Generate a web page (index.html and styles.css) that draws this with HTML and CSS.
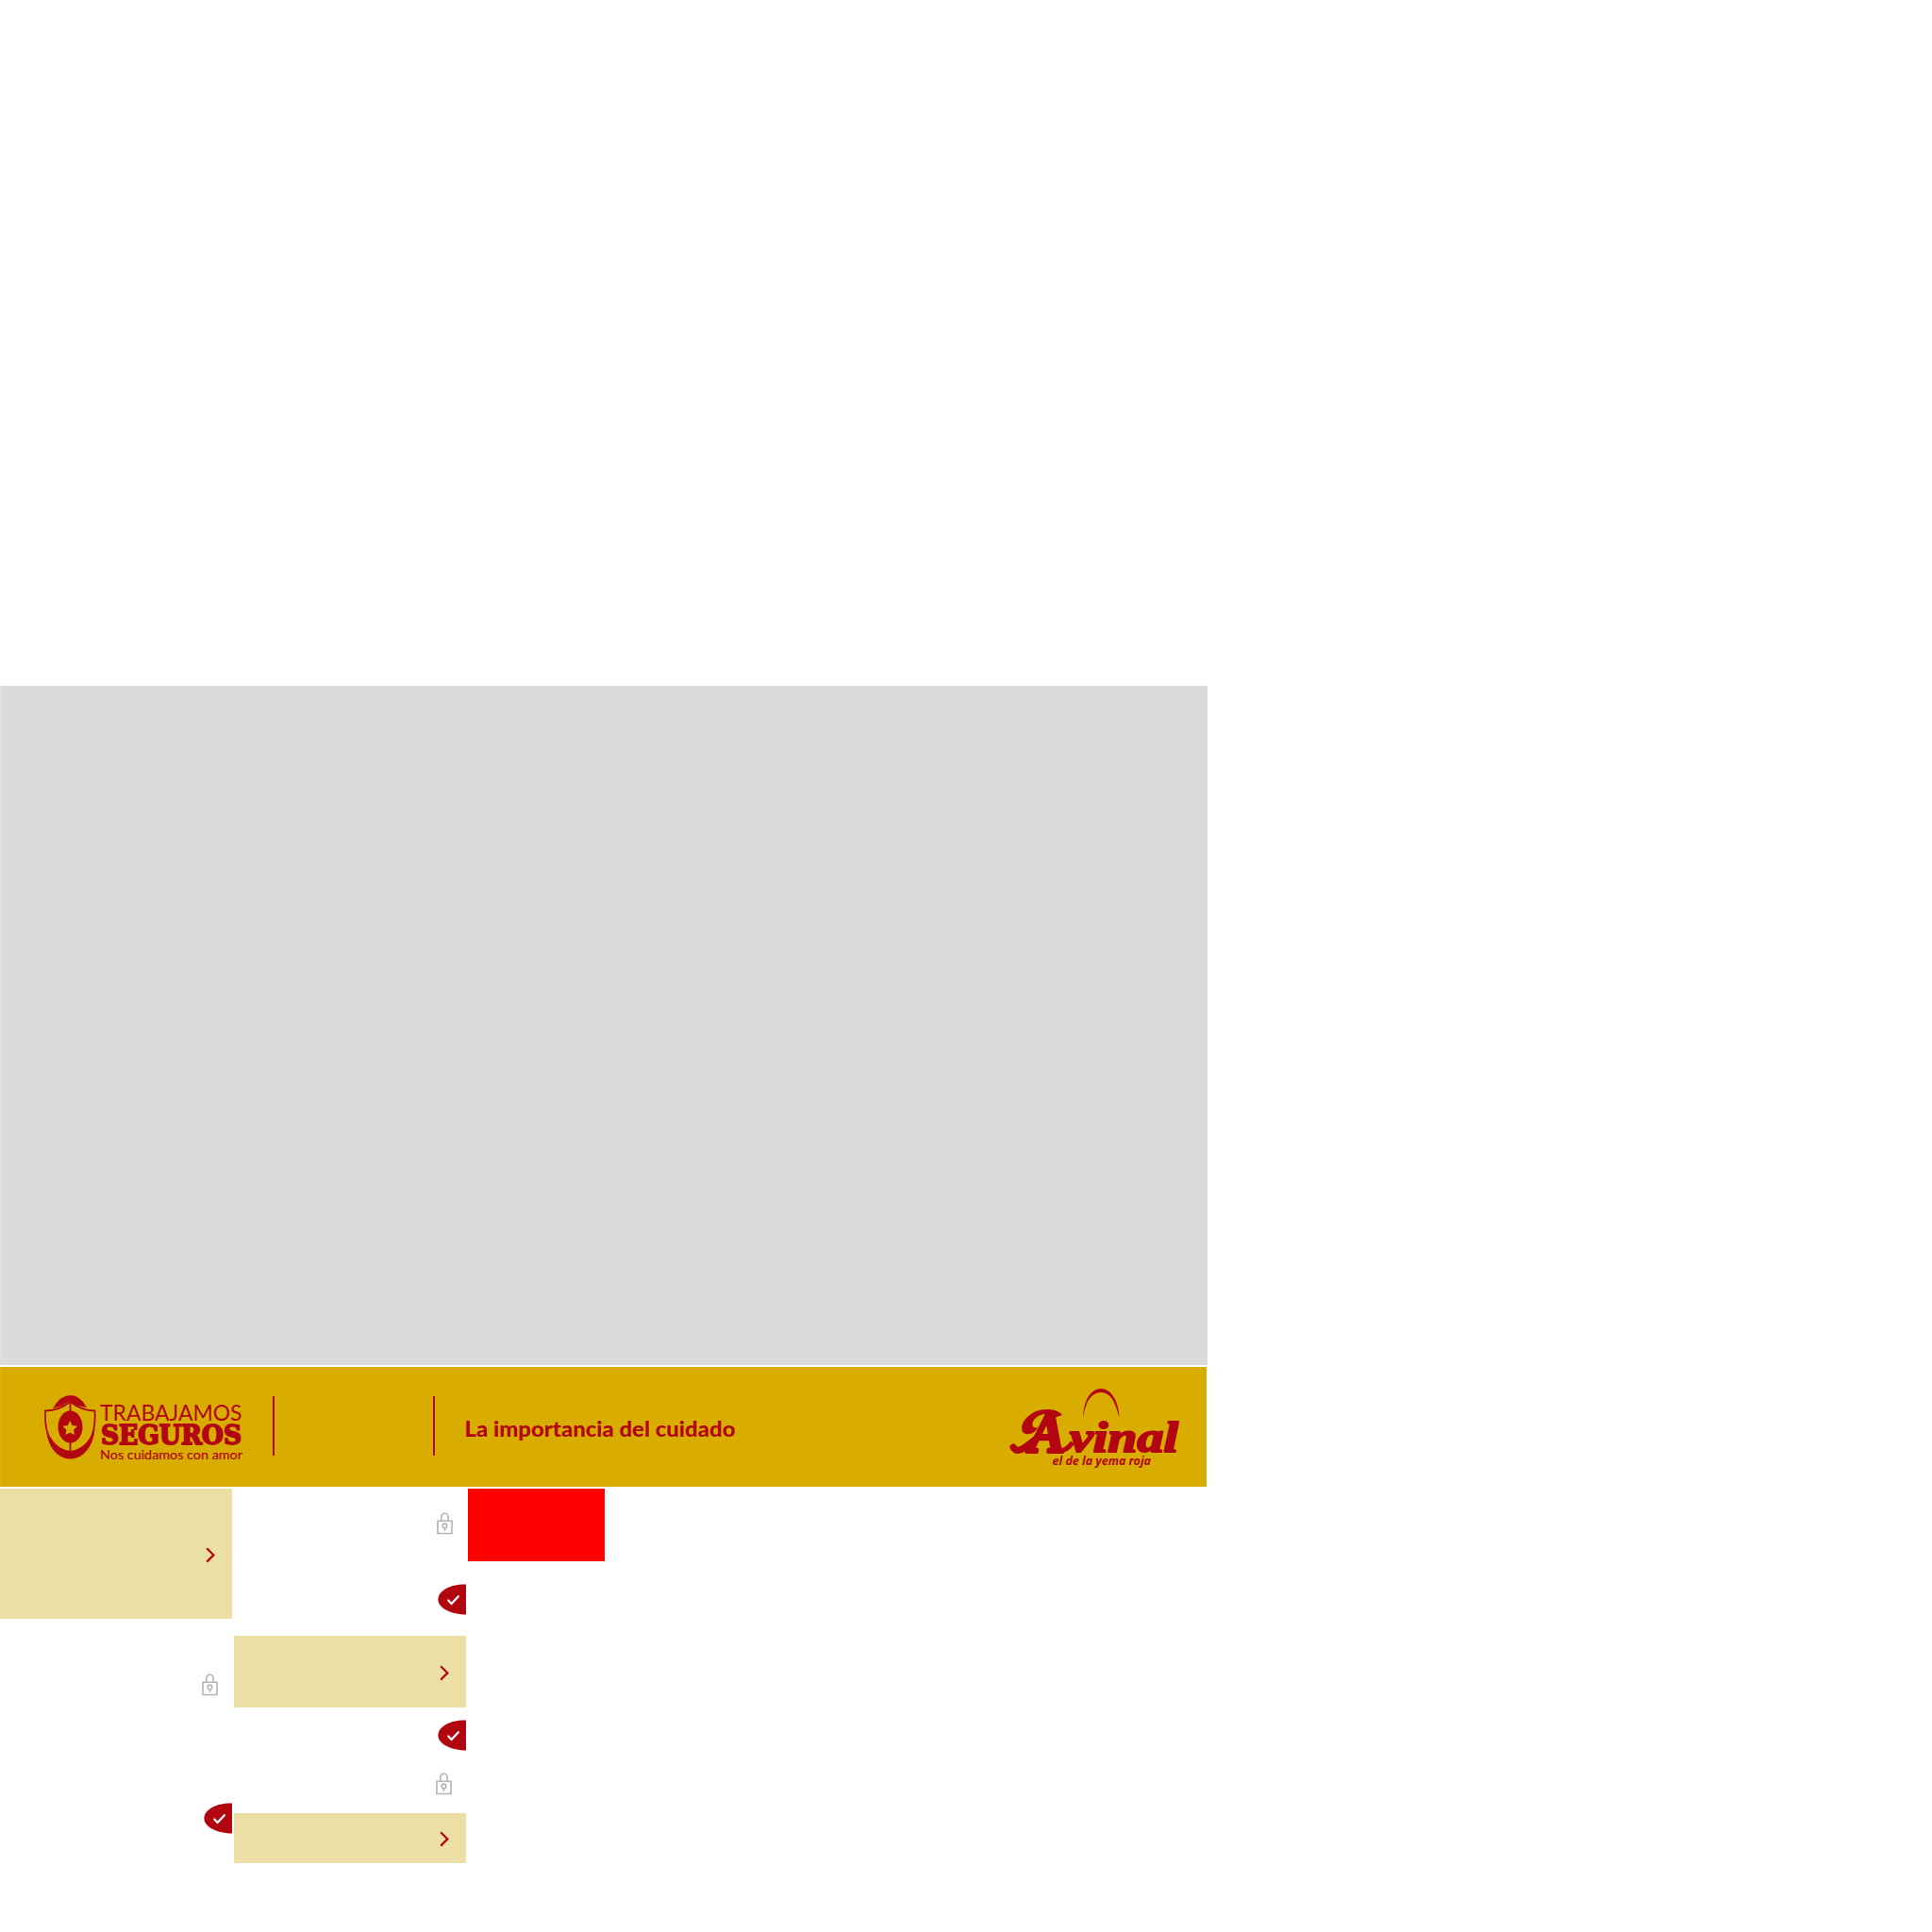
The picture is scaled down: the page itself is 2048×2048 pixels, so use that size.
FILE: index.html
```html
<!DOCTYPE html>
<html lang="es">
<head>
<meta charset="utf-8">
<title>La importancia del cuidado</title>
<link rel="stylesheet" href="styles.css">
</head>
<body>
<svg width="0" height="0" class="defs" aria-hidden="true">
  <symbol id="lock" viewBox="0 0 17 24"><path d="M1 9.2h15v13.3H1z M4.8 9V5.3a3.7 4.3 0 0 1 7.4 0V9" /><circle cx="8.5" cy="14.4" r="2.3"/><path d="M8.5 16.7v3.1"/></symbol>
  <symbol id="chevron" viewBox="0 0 10 17"><path d="M1.2 1.2 8.4 8.4 1.2 15.6"/></symbol>
  <symbol id="check" viewBox="0 0 30 33"><path class="drop" d="M30 .5C14 0 .4 7 .4 16.4S15 32.4 30 32.4z"/><path class="tick" d="m11.3 17.5 3.3 3.500 7.300-7.800"/></symbol>
</svg>
<main class="stage"></main>
<header class="banner">
  <svg class="brand" width="222" height="76" viewBox="44 1475 222 76">
    <path class="fill" d="M56 1493Q64 1479 74.500 1479T92 1492L82 1490 74 1485 66 1490z"/>
    <path class="fill" d="M49 1514Q57 1536 74.500 1538 92 1536 100.500 1514C99 1535 87 1546.500 74.500 1546.500S50 1535 49 1514z"/>
    <path class="line" d="M74.500 1486C68 1491 59 1495.500 48 1495.500 47 1521 54 1536 74.500 1542 94 1536 102 1521 100.500 1495.500 90 1495.500 81 1491 74.500 1486V1542"/>
    <ellipse class="fill" cx="74.500" cy="1512.500" rx="13" ry="17"/>
    <path class="star" d="m74.200 1506 2.400 5 5.400.8-4 3.900 1 5.400-4.800-2.500-4.800 2.500 1-5.400-4-3.900 5.400-.8z"/>
    <text class="sans" x="106" y="1505.500" font-size="22.500" textLength="150.500" lengthAdjust="spacingAndGlyphs">TRABAJAMOS</text>
    <text class="slab" x="107" y="1531" font-size="27" textLength="149" lengthAdjust="spacingAndGlyphs">SEGUROS</text>
    <text class="sans small" x="106" y="1546.500" font-size="13.500" textLength="151" lengthAdjust="spacingAndGlyphs">Nos cuidamos con amor</text>
  </svg>
  <span class="rule first"></span>
  <span class="rule second"></span>
  <svg class="title" width="290" height="36" viewBox="492 1498 290 36"><text x="492.500" y="1522" textLength="287" lengthAdjust="spacingAndGlyphs">La importancia del cuidado</text></svg>
  <svg class="avinal" width="184" height="90" viewBox="1068 1469 184 90">
    <path class="fill" d="M1148 1502C1149 1482 1157 1471 1167 1471S1186 1483 1186.500 1502C1182 1484 1177 1475 1167 1475S1151 1484 1148 1502z"/>
    <path class="fill" d="M1126 1499C1122 1492 1105 1491 1096 1496 1085 1502 1081 1511 1084 1517 1089 1522 1098 1518 1100 1512 1095 1514 1092 1509 1097 1503 1103 1497 1112 1496 1117 1502z"/>
    <path class="flourish" d="M1074 1533C1079 1542 1089 1531 1101 1522"/>
    <path class="curl" d="M1121 1537Q1130 1538 1137 1528"/>
    <text class="mark capital" x="1091" y="1538" font-size="62" textLength="38" lengthAdjust="spacingAndGlyphs">A</text>
    <text class="mark" x="1134" y="1537.500" font-size="47" textLength="115" lengthAdjust="spacingAndGlyphs">vinal</text>
    <text class="tag" x="1115.500" y="1551.500" font-size="12" textLength="104.500" lengthAdjust="spacingAndGlyphs">el de la yema roja</text>
  </svg>
</header>
<section class="samples">
  <div class="column">
    <div class="tile tall"><svg class="chevron"><use href="#chevron"/></svg></div>
    <svg class="lock lock-a"><use href="#lock"/></svg>
    <svg class="badge badge-a"><use href="#check"/></svg>
  </div>
  <div class="column">
    <svg class="lock lock-b"><use href="#lock"/></svg>
    <svg class="badge badge-b"><use href="#check"/></svg>
    <div class="tile medium"><svg class="chevron"><use href="#chevron"/></svg></div>
    <svg class="badge badge-c"><use href="#check"/></svg>
    <svg class="lock lock-c"><use href="#lock"/></svg>
    <div class="tile short"><svg class="chevron"><use href="#chevron"/></svg></div>
  </div>
  <div class="swatch"></div>
</section>
</body>
</html>
```
FILE: styles.css
```css
* { box-sizing: border-box; }
body { margin: 0; padding-top: 727px; height: 2048px; overflow: hidden; background: #fff; font-family: Lato, sans-serif; }
svg { display: block; flex: none; }
.defs { position: absolute; }
.stage { width: 1280px; height: 720px; background: #dbdbdb; border-left: 1px solid #e0e0e0; }
.banner { display: flex; align-items: flex-start; width: 1279px; height: 127px; margin-top: 2px; padding-left: 43px; background: #d8ad00; border-left: 1px solid #dbb41c; }
.brand { margin-top: 26px; }
.rule { flex: none; width: 2px; height: 63px; margin-top: 31px; background: #b20610; }
.first { margin-left: 23px; }
.second { margin-left: 168px; }
.title { margin: 50px 0 0 31px; fill: #b20610; font-size: 22.5px; font-weight: 900; }
.avinal { margin: 21px 0 0 286px; overflow: visible; }
.fill { fill: #b20610; }
.line { fill: none; stroke: #b20610; stroke-width: 1.8; }
.star { fill: #d8ad00; }
.sans { fill: #b20610; font-family: Lato, sans-serif; }
.small { stroke: #b20610; stroke-width: .2; }
.slab { fill: #b20610; stroke: #b20610; stroke-width: 1.8; font-family: "DejaVu Serif", serif; font-weight: 700; }
.mark { fill: #b20610; stroke: #b20610; stroke-width: 2.2; stroke-linejoin: round; font-family: "Liberation Serif", serif; font-weight: 700; font-style: italic; }
.capital { stroke-width: 4; }
.flourish { fill: none; stroke: #b20610; stroke-width: 7; stroke-linecap: round; }
.curl { fill: none; stroke: #b20610; stroke-width: 5; }
.tag { fill: #b20610; font-family: "Noto Sans", sans-serif; font-weight: 700; font-style: italic; }
.samples { display: flex; align-items: flex-start; gap: 2px; padding-top: 2px; }
.column { display: flex; flex-direction: column; width: 246px; }
.tile { display: flex; align-items: center; justify-content: flex-end; padding-right: 18px; background: #ecdfa5; }
.tall { height: 138px; padding-top: 2px; }
.medium { height: 76px; margin-top: 22px; padding-top: 3px; }
.short { height: 53px; margin-top: 19px; padding-top: 2px; }
.chevron { width: 10px; height: 17px; fill: none; stroke: #b20610; stroke-width: 2.2; }
.lock { width: 17px; height: 24px; fill: none; stroke: #b4b4b4; stroke-width: 1.6; }
.lock-a { margin: 58px 0 0 214px; }
.lock-b { margin: 25px 0 0 215px; }
.lock-c { margin: 23px 0 0 214px; }
.badge { width: 30px; height: 33px; margin-left: 216px; }
.badge-a { margin-top: 113px; }
.badge-b { margin-top: 52px; }
.badge-c { margin-top: 13px; }
.drop { fill: #b20610; }
.tick { fill: none; stroke: #fff; stroke-width: 2.2; stroke-linecap: round; stroke-linejoin: round; }
.swatch { width: 145px; height: 77px; background: #f00; }
```
